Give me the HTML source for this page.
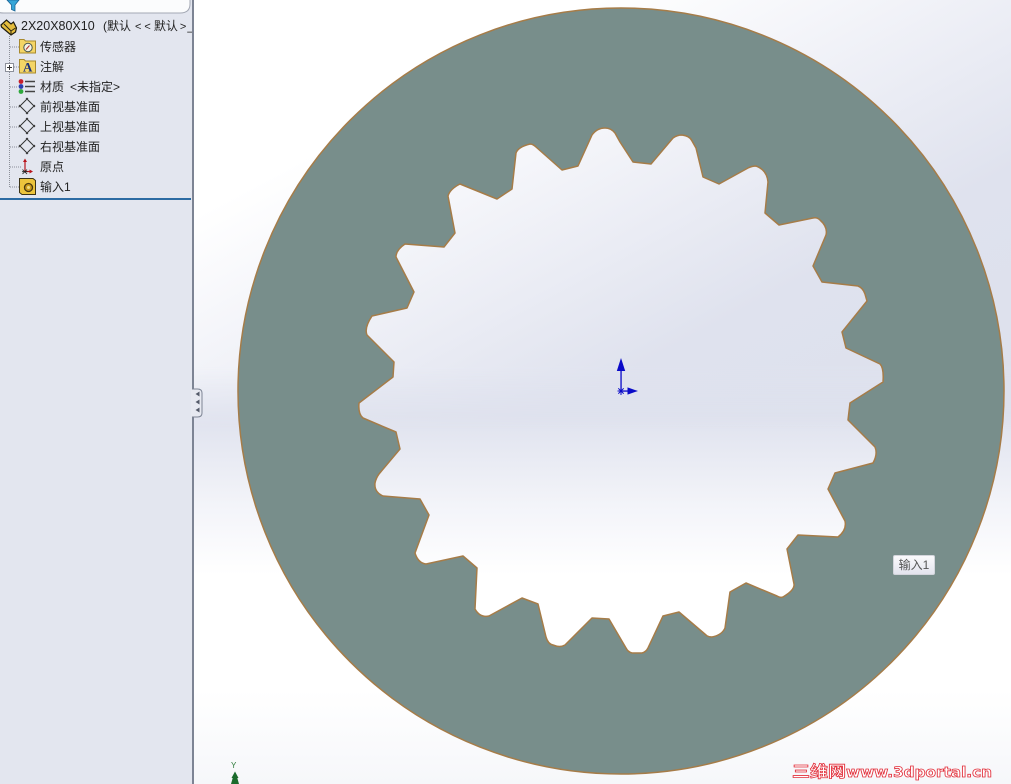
<!DOCTYPE html>
<html><head><meta charset="utf-8"><style>
html,body{margin:0;padding:0;width:1011px;height:784px;overflow:hidden;background:#fff}
body{position:relative;font-family:"Liberation Sans","Noto Sans CJK SC",sans-serif}
#c1{position:absolute;left:0;top:0;width:1011px;height:784px;background:linear-gradient(180deg,#dfe2ee 0,#dfe2ee 415px,#f3f4f9 505px,#fff 575px,#fff 690px,#f6f7fa 784px)}
#c2{position:absolute;left:0;top:0;width:1011px;height:430px;background:linear-gradient(152deg,#fff 33%,#f3f4f9 48%,#dfe2ee 73%,#dde0ec 100%);-webkit-mask-image:linear-gradient(180deg,#000 85%,transparent 100%)}
#side{position:absolute;left:0;top:0;width:192px;height:784px;background:#e3e6ef;border-right:2px solid #7d8494}
#line{position:absolute;left:0;top:198px;width:191px;height:2px;background:#2c6ba3}
.t{position:absolute;font-size:12px;line-height:16px;color:#222;white-space:nowrap}
#tip{position:absolute;left:893px;top:555px;width:42px;height:20px;box-sizing:border-box;background:linear-gradient(#fafafc,#e3e4ee);border:1px solid #d3d5dc;border-radius:2px;font-size:12px;line-height:18px;color:#555;text-align:center}
svg{position:absolute;left:0;top:0}
</style></head><body>
<div id="c1"></div><div id="c2"></div>
<svg width="1011" height="784" viewBox="0 0 1011 784">
<path fill-rule="evenodd" fill="#788e8b" stroke="#a67c48" stroke-width="1.500" stroke-linejoin="round" d="M238 391a383 383 0 1 0 766 0a383 383 0 1 0 -766 0Z
M592 135Q597 128 605 128Q611 128 615 133L620 142L633 162L651 164L673 138Q677 135 682 135Q690 136 692 141L696 148L703 177L719 184L748 168Q752 166 756 166Q767 170 768 182L765 213L779 225L813 218Q817 217 820 220Q828 227 826 235L813 266L822 282L858 286Q863 288 865 294L867 301L842 332L846 348L880 364Q884 368 883 382L850 403L848 420L875 447Q878 454 873 463L835 473L828 489L845 521Q847 530 838 537L798 535L787 549L794 584Q795 590 783 597Q780 598 777 596L746 583L730 592L725 628Q722 635 712 637Q708 637 706 635L679 612L663 616L648 648Q646 652 642 653L632 653Q628 652 626 648L609 619L592 618L565 645Q560 648 553 645Q548 644 546 637L538 604L522 598L489 616Q480 618 475 609L477 568L463 556L426 564Q418 563 415 553L429 515L420 499L383 496Q374 492 375 483Q376 478 379 474L400 449L396 432L363 418Q358 414 359 403L393 377L394 362L367 335Q364 328 372 316L407 308L414 292L396 257Q396 250 405 244L444 247L455 233L448 196Q450 189 460 184L497 199L512 189L516 153Q518 147 530 144Q533 144 536 147L562 170L578 166Z"/>
<g fill="#0a0ac8" stroke="none">
<path d="M621 358L625.200 371H616.800Z"/><rect x="620.400" y="370" width="1.300" height="21"/>
<path d="M638 391L627.500 387.400V394.600Z"/><rect x="621" y="390.400" width="8" height="1.300"/>
</g>
<g stroke="#0a0ac8" stroke-width="1" fill="none"><path d="M617.500 391H625M621 387.500V395M618.300 388.300L623.700 393.700M623.700 388.300L618.300 393.700"/></g>
<path d="M235 771.500L238.500 778H237.300L239 784H231L232.700 778H231.500Z" fill="#1c6b2c"/>
</svg>
<div class="t" style="left:231px;top:761px;font-size:8px;line-height:9px;color:#2d7a3a">Y</div>
<div id="tip">输入1</div>
<svg width="1011" height="784" viewBox="0 0 1011 784" style="filter:blur(.35px)">
<g font-weight="bold" fill="#fff" stroke="#e2303c" stroke-width=".8">
<text x="792" y="777" font-family="'Noto Sans CJK SC',sans-serif" font-size="16" textLength="54" lengthAdjust="spacingAndGlyphs">三维网</text>
<text x="846" y="777" font-family="'DejaVu Sans',sans-serif" font-size="14" textLength="146" lengthAdjust="spacingAndGlyphs">www.3dportal.cn</text>
</g>
</svg>
<div id="side"><div id="line"></div></div>
<svg width="210" height="430" viewBox="0 0 210 430">
<path d="M192 389H197.500Q202 389 202 393V413Q202 417 197.500 417H192" fill="#e7e9f1" stroke="#7d8494" stroke-width="1"/>
<rect x="191" y="390" width="3" height="26" fill="#e7e9f1"/>
<g fill="#555b6a"><path d="M195.500 394L199.500 391.500V396.500Z"/><path d="M195.500 402L199.500 399.500V404.500Z"/><path d="M195.500 410L199.500 407.500V412.500Z"/></g>
<path d="M-8 -8H190V4Q190 13 180 13H4Q-8 13 -8 4Z" fill="#fbfcfd" stroke="#a3a8b4" stroke-width="1"/>
<path d="M7 0H19L15 5V11L11.500 9.500V5Z" fill="#35a6d8" stroke="#1a6496" stroke-width=".8"/>
<g stroke="#8b8f98" stroke-width="1" stroke-dasharray="1 1" fill="none">
<path d="M9.500 36V187.500M10 47H19M14 67H19M10 87H18M10 107H19M10 127H19M10 147H19M10 167H22M10 187H19"/>
</g>
<rect x="5.500" y="63.500" width="8" height="8" fill="#fff" stroke="#8c909a"/><path d="M7 67.500H12M9.500 65V70" stroke="#333" stroke-width="1"/>
<path d="M1 25L6.500 20L11 24L13.500 22L16.500 28L15.500 32L11 35L1.500 27Z" fill="#e4bd3e" stroke="#1e1c10" stroke-width="1.200"/><path d="M4 24L11 31V35M11 31L15.500 28" stroke="#2a2614" stroke-width="1" fill="none"/>
<path d="M19.500 42V39.500H24L25.500 41H35.500V53H19.500Z" fill="#f4d566" stroke="#a98a2e"/><circle cx="28" cy="47.500" r="4.200" fill="#f5f3e5" stroke="#4c5a50"/><path d="M26 49.500L29.500 45.500" stroke="#b03030"/>
<path d="M19.500 62V59.500H24L25.500 61H35.500V73H19.500Z" fill="#f4d566" stroke="#a98a2e"/><text x="23" y="71.500" font-family="'Liberation Serif',serif" font-weight="bold" font-size="13" fill="#1a2f7a">A</text>
<circle cx="21" cy="81.500" r="2.400" fill="#c8202c"/><circle cx="21" cy="86.500" r="2.400" fill="#2a3fb0"/><circle cx="21" cy="91.500" r="2.400" fill="#2ea83c"/>
<path d="M25 81.500H35M25 86.500H35M25 91.500H35" stroke="#444" stroke-width="1.500"/>
<g fill="none" stroke="#333" stroke-width="1"><path d="M19 107L28 98M26 98L35 107M35 105L26 114M28 114L19 105"/><path d="M19 127L28 118M26 118L35 127M35 125L26 134M28 134L19 125"/><path d="M19 147L28 138M26 138L35 147M35 145L26 154M28 154L19 145"/></g>
<path d="M25 160V172" stroke="#b8141c" stroke-width="1.200"/><path d="M25 158.500L27 162H23Z" fill="#b8141c"/><path d="M25 171.500H31" stroke="#b8141c" stroke-width="1.200"/><path d="M33 171.500L29.500 169.500V173.500Z" fill="#b8141c"/><path d="M22.500 169.500L27 174M27 169.500L22.500 174M22 171.700H27.500" stroke="#222" stroke-width=".8"/>
<path d="M19.500 181V178.500H33L35.500 180.500V194.500H22L19.500 192.500Z" fill="#ecc43c" stroke="#3c3418"/><circle cx="28.500" cy="187.500" r="4" fill="#c99a1c" stroke="#4a3a10" stroke-width="1.300"/><circle cx="28.500" cy="187.500" r="1.500" fill="#f1dc7c"/>
</svg>
<div class="t" style="left:21px;top:18px;font-size:12.500px">2X20X80X10</div>
<div class="t" style="left:103px;top:18px;width:89px;overflow:hidden">(默认<span style="margin-left:4px;letter-spacing:3px;font-size:11px">&lt;&lt;</span>默认<span style="margin-left:2px;font-size:11px">&gt;</span><span style="margin-left:1px">_显示状态</span></div>
<div class="t" style="left:40px;top:39px">传感器</div>
<div class="t" style="left:40px;top:59px">注解</div>
<div class="t" style="left:40px;top:79px">材质</div>
<div class="t" style="left:70px;top:79px">&lt;未指定&gt;</div>
<div class="t" style="left:40px;top:99px">前视基准面</div>
<div class="t" style="left:40px;top:119px">上视基准面</div>
<div class="t" style="left:40px;top:139px">右视基准面</div>
<div class="t" style="left:40px;top:159px">原点</div>
<div class="t" style="left:40px;top:179px">输入1</div>
</body></html>
